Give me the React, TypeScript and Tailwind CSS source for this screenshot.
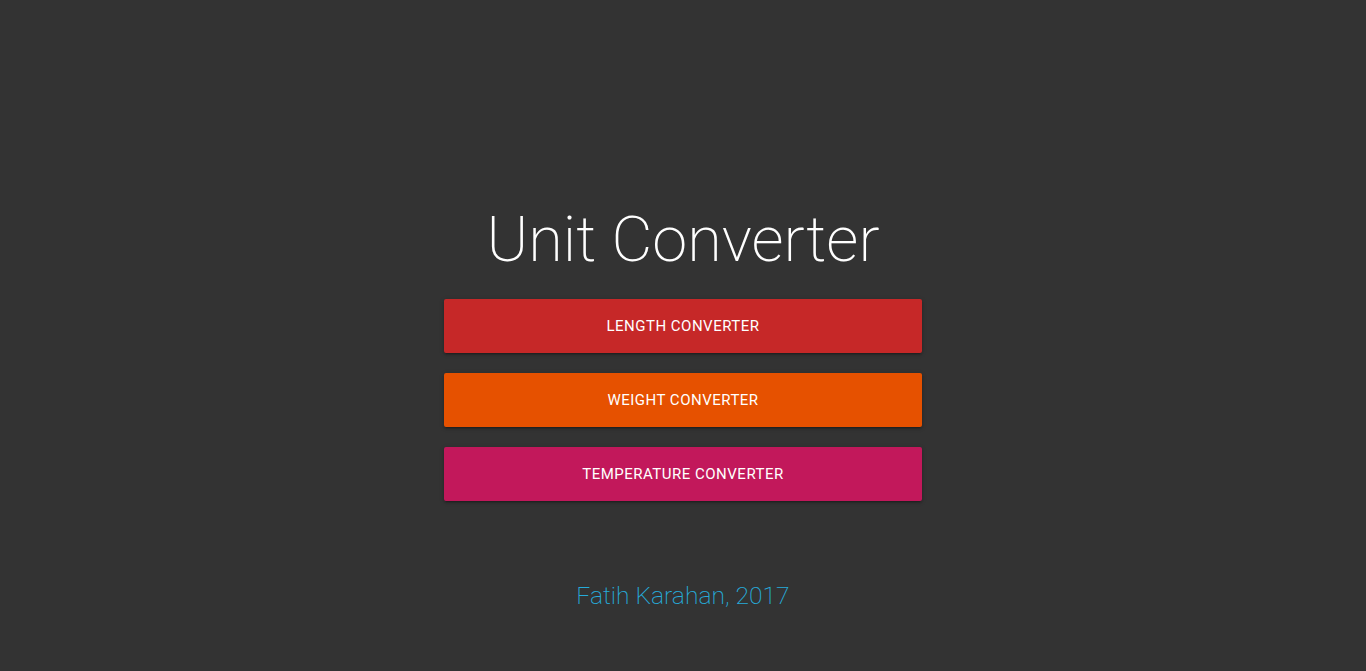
import React from 'react';

const buttons = [
  { label: 'Length Converter', color: 'bg-[#c62828]' },
  { label: 'Weight Converter', color: 'bg-[#e65100]' },
  { label: 'Temperature Converter', color: 'bg-[#c2185b]' },
];

export default function App() {
  return (
    <div className="min-h-[671px] bg-[#333333] flex flex-col items-center font-['Roboto',sans-serif]">
      {/* title */}
      <h1 className="mt-[205px] text-[63px] leading-[70px] font-extralight text-white">Unit Converter</h1>

      {/* buttons */}
      <div className="mt-[24px] w-[478px] flex flex-col gap-[20px]">
        {buttons.map((b) => (
          <button
            key={b.label}
            className={`${b.color} h-[54px] w-full rounded-[2px] text-white text-[15px] font-normal uppercase tracking-[0.5px] shadow-[0_2px_2px_0_rgba(0,0,0,0.14),0_3px_1px_-2px_rgba(0,0,0,0.12),0_1px_5px_0_rgba(0,0,0,0.2)]`}
          >
            {b.label}
          </button>
        ))}
      </div>

      {/* footer */}
      <p className="mt-[80px] text-[24.6px] leading-[30px] font-extralight text-[#26abda]">Fatih Karahan, 2017</p>
    </div>
  );
}
